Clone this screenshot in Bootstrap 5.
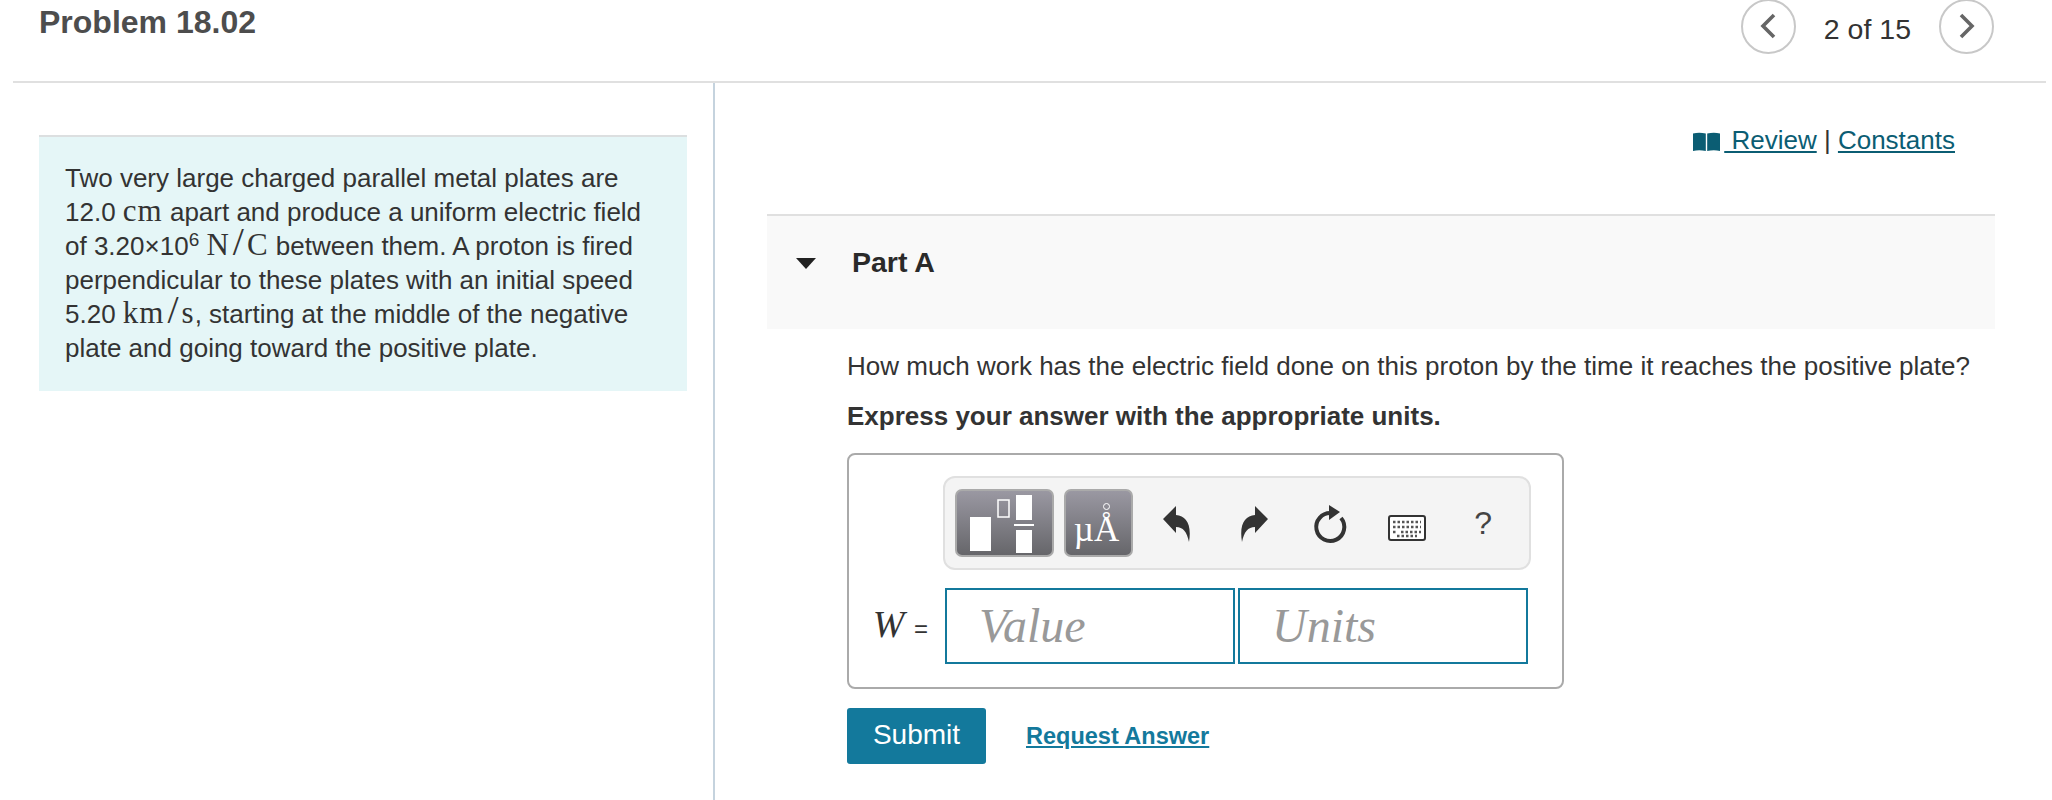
<!DOCTYPE html>
<html lang="en"><head><meta charset="utf-8"><title>Problem 18.02</title>
<link href="https://cdn.jsdelivr.net/npm/bootstrap@5.3.0/dist/css/bootstrap.min.css" rel="stylesheet">
<style>
html,body{height:800px;overflow:hidden}
body{font-family:"Liberation Sans",Arial,sans-serif;font-size:26px;color:#333;line-height:34px;background:#fff}
.top-bar{height:83px;margin:0 6px 0 13px;border-bottom:2px solid #e0e0e0;padding:0 52px 0 26px}
.prob-title{font-size:32px;font-weight:700;color:#4d4d4d;line-height:36px;margin:4px 0 0}
.pager{gap:28px;height:54px;margin-top:-1px}
.pager-btn{width:55px;height:55px;border-radius:50%;border:2px solid #c8c8c8;background:#fff;padding:0;display:flex;align-items:center;justify-content:center}
.pager-num{font-size:28.500px;margin-top:5px}
.main-split{height:717px}
.left-pane{width:715px;border-right:2px solid #c5d3de;padding:52px 26px 0 39px;flex:none}
.intro-box{background:#e5f6f7;border-top:2px solid #dcdfe0;padding:24px 26px 28px;height:256px}
.mj{font-family:"Liberation Serif",serif;font-size:31px;line-height:0;letter-spacing:1px}
.mj-slash{font-size:40px;font-weight:400;margin:0 3px;letter-spacing:0}
.sup6{font-size:19px;vertical-align:9px;line-height:0}
.right-pane{padding:0 57px 0 52px;flex:1;min-width:0}
.res-line{height:131px;padding:40px 40px 0 0;text-align:right;font-size:26px}
.res-line a{color:#0b5d73}
.part-head{height:115px;background:#f9f9f9;border-top:2px solid #e0e0e0;padding:29px 0 0 29px;gap:36px;font-size:28.500px;font-weight:700;color:#2a2a2a}
.tri{width:0;height:0;border-left:10px solid transparent;border-right:10px solid transparent;border-top:11px solid #222;margin-top:13px}
.part-body{padding:19px 0 0 80px}
.q-text{font-size:26px;margin:0;white-space:nowrap;line-height:36px}
.q-bold{font-size:26px;font-weight:700;margin:14px 0 0;line-height:36px}
.ans-box{width:717px;height:236px;margin-top:19px;border:2px solid #aaa;border-radius:8px;padding:21px 25px 0 0}
.tool-bar{margin-left:94px;height:94px;width:588px;background:#f4f4f4;border:2px solid #e0e0e0;border-radius:12px;padding:11px 0 11px 10px}
.tool-bar>*{flex:none}
.tpl-btn{height:68px;border-radius:7px;border:2px solid #aaa;background:linear-gradient(#9a98a2,#66666a);padding:0;display:flex;align-items:center;justify-content:center;color:#fff}
.tpl-a{width:99px}.tpl-b{width:69px;margin-left:10px;font-family:"Liberation Serif",serif;font-size:35px;line-height:1;padding:12px 4px 0 0;position:relative}
.ring{position:absolute;width:7px;height:7px;border:1px solid #fff;border-radius:50%;left:37px;top:12px}
.tool-ico{width:76.500px;display:flex;justify-content:center;align-items:center;background:none;border:0;padding:0;height:68px;margin-top:2px}
.first-ico{margin-left:6px}
.kbd-ico{margin-top:10px}
.q-mark{font-size:32px;color:#444;margin-bottom:2px}
.inp-row{margin-top:18px;height:76px}
.w-lab{width:96px;text-align:right;padding-right:17px;font-family:"Liberation Serif",serif;font-size:38px;font-style:italic;white-space:nowrap}
.w-lab span{font-style:normal;font-family:"Liberation Sans",sans-serif;font-size:24px}
.ans-field{width:290px;height:76px;border:2px solid #13799c;border-radius:0;padding:0 32px 2px;font-family:"Liberation Serif",serif;font-style:italic;font-size:48px;color:#999;background:#fff;margin-right:3px;outline:0}
.ans-field::placeholder{color:#999;opacity:1}
.act-row{margin-top:19px;gap:40px}
.sub-btn{width:139px;height:56px;background:#13799c;border:0;color:#fff;font-size:28px;border-radius:3px;padding:0 0 2px}
.req-link{font-size:23.500px;font-weight:700;color:#13799c}
</style></head><body>
<div class="top-bar d-flex justify-content-between align-items-start">
<h1 class="prob-title">Problem 18.02</h1>
<div class="pager d-flex align-items-center">
<button class="pager-btn" aria-label="Previous"><svg width="18" height="26" viewBox="0 0 18 26"><path d="M15 2 4 13l11 11" fill="none" stroke="#666" stroke-width="3.600"/></svg></button>
<span class="pager-num">2 of 15</span>
<button class="pager-btn" aria-label="Next"><svg width="18" height="26" viewBox="0 0 18 26"><path d="M3 2l11 11L3 24" fill="none" stroke="#666" stroke-width="3.600"/></svg></button>
</div></div>
<div class="main-split d-flex">
<div class="left-pane"><div class="intro-box">Two very large charged parallel metal plates are 12.0&nbsp;<span class="mj">cm</span> apart and produce a uniform electric field of 3.20×10<span class="sup6">6</span>&nbsp;<span class="mj">N<span class="mj-slash">/</span>C</span> between them. A proton is fired perpendicular to these plates with an initial speed 5.20&nbsp;<span class="mj">km<span class="mj-slash">/</span>s</span>, starting at the middle of the negative plate and going toward the positive plate.</div></div>
<div class="right-pane">
<div class="res-line"><svg width="27" height="20" viewBox="0 0 27 20" class="me-1"><path d="M0 1.500Q6 0 12.800 1.500V19Q6 17.500 0 19zM14.200 1.500Q21 0 27 1.500V19Q21 17.500 14.200 19z" fill="#0b5d73"/></svg><a href="#">&nbsp;Review</a> | <a href="#">Constants</a></div>
<div class="part-head d-flex"><span class="tri"></span><span>Part A</span></div>
<div class="part-body">
<p class="q-text">How much work has the electric field done on this proton by the time it reaches the positive plate?</p>
<p class="q-bold">Express your answer with the appropriate units.</p>
<div class="ans-box">
<div class="tool-bar d-flex align-items-center">
<button class="tpl-btn tpl-a" aria-label="Templates"><svg width="80" height="60" viewBox="0 0 80 60"><rect x="5" y="24" width="21" height="34" fill="#fff"/><rect x="33" y="7" width="11" height="17" fill="none" stroke="#fff" stroke-width="1.500"/><rect x="51" y="2" width="16" height="25" fill="#fff"/><rect x="49" y="31" width="20" height="2" fill="#fff"/><rect x="51" y="37" width="16" height="24" fill="#fff"/></svg></button>
<button class="tpl-btn tpl-b"><span class="ring"></span>µÅ</button>
<span class="tool-ico first-ico"><svg width="30" height="40" viewBox="0 0 30 40"><path d="M1 15 14 2v9c10 1 16 9 13 27-2-10-6-15-13-15v6z" fill="#333"/></svg></span>
<span class="tool-ico"><svg width="30" height="40" viewBox="0 0 30 40"><path d="M29 15 16 2v9C6 12 0 20 3 38c2-10 6-15 13-15v6z" fill="#333"/></svg></span>
<span class="tool-ico"><svg width="36" height="44" viewBox="0 0 36 44"><path d="M19 11A14 14 0 1 0 29 16" fill="none" stroke="#333" stroke-width="4"/><path d="M17 3l11 7-11 8z" fill="#333"/></svg></span>
<span class="tool-ico kbd-ico"><svg width="38" height="26" viewBox="0 0 38 26"><rect x="1" y="1" width="36" height="24" rx="2" fill="#fff" stroke="#333" stroke-width="2"/><path d="M5 7h28M5 12h28M5 17h4M13 17h20M9 21h20" stroke="#555" stroke-width="2.500" stroke-dasharray="2.500 2"/></svg></span>
<span class="tool-ico q-mark">?</span>
</div>
<div class="inp-row d-flex align-items-center">
<span class="w-lab">W <span>=</span></span>
<input class="ans-field" placeholder="Value" aria-label="Value"><input class="ans-field" placeholder="Units" aria-label="Units">
</div></div>
<div class="act-row d-flex align-items-center"><button class="sub-btn">Submit</button><a href="#" class="req-link">Request Answer</a></div>
</div></div></div>
</body></html>
